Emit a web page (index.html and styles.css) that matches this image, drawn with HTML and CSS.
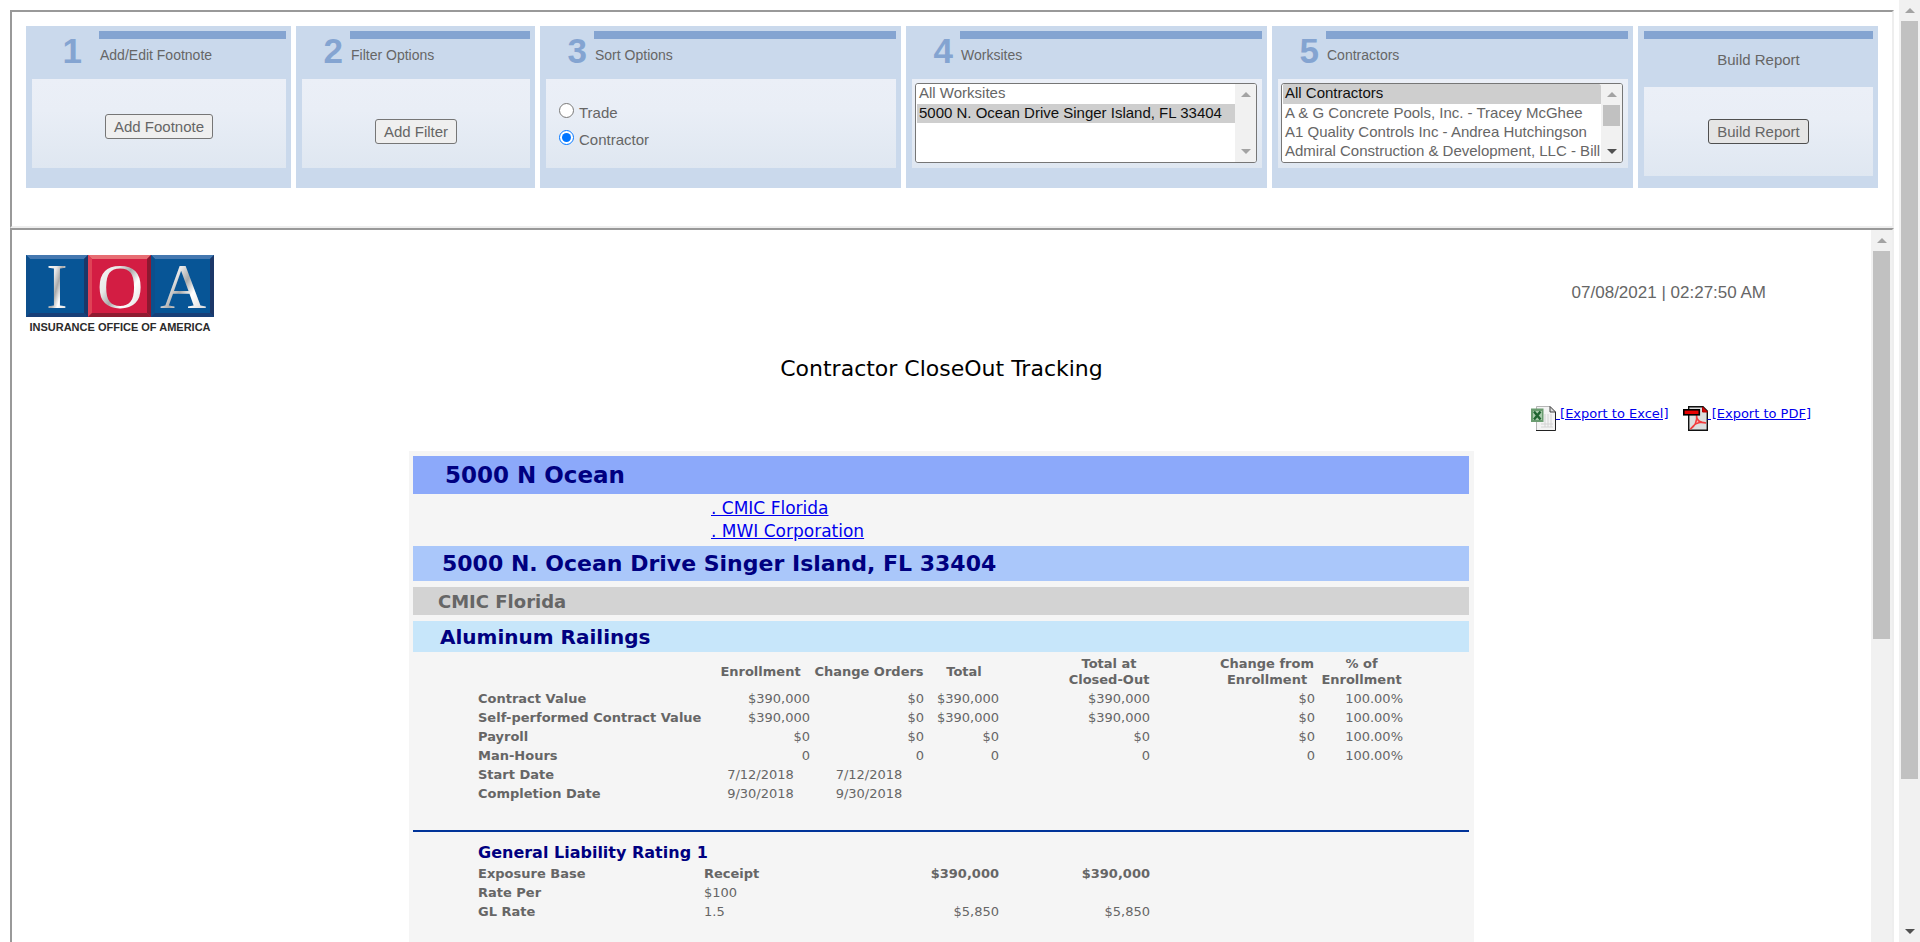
FILE: index.html
```html
<!DOCTYPE html>
<html lang="en">
<head>
<meta charset="utf-8">
<title>Contractor CloseOut Tracking</title>
<link rel="stylesheet" href="styles.css">
</head>
<body>
<main class="page">
  <form class="frame steps">
    <section class="panel first">
      <div class="head"><span class="num">1</span><h2>Add/Edit Footnote</h2></div>
      <div class="box raised"><button type="button">Add Footnote</button></div>
    </section>
    <section class="panel">
      <div class="head"><span class="num">2</span><h2>Filter Options</h2></div>
      <div class="box"><button type="button">Add Filter</button></div>
    </section>
    <section class="panel">
      <div class="head"><span class="num">3</span><h2>Sort Options</h2></div>
      <div class="box radios">
        <label><input type="radio" name="sort"><span>Trade</span></label>
        <label><input type="radio" name="sort" checked><span>Contractor</span></label>
      </div>
    </section>
    <section class="panel">
      <div class="head"><span class="num">4</span><h2><label for="worksites">Worksites</label></h2></div>
      <div class="box">
        <div class="list">
          <select id="worksites" multiple size="4">
            <option>All Worksites</option>
            <option selected>5000 N. Ocean Drive Singer Island, FL 33404</option>
          </select>
          <div class="scroll" aria-hidden="true"><i class="up"></i><i class="track"></i><i class="down dim"></i></div>
        </div>
      </div>
    </section>
    <section class="panel">
      <div class="head"><span class="num">5</span><h2><label for="contractors">Contractors</label></h2></div>
      <div class="box">
        <div class="list">
          <select id="contractors" multiple size="4">
            <option selected>All Contractors</option>
            <option>A &amp; G Concrete Pools, Inc. - Tracey McGhee</option>
            <option>A1 Quality Controls Inc - Andrea Hutchingson</option>
            <option>Admiral Construction &amp; Development, LLC - Bill</option>
          </select>
          <div class="scroll" aria-hidden="true"><i class="up"></i><i class="thumb short"></i><i class="track"></i><i class="down"></i></div>
        </div>
      </div>
    </section>
    <section class="panel build">
      <div class="head"><h2>Build Report</h2></div>
      <div class="box"><button type="submit" class="active">Build Report</button></div>
    </section>
  </form>

  <div class="frame viewer">
    <article class="doc">
      <header class="doc-head">
        <svg class="logo" width="188" height="78" viewBox="0 0 188 78" role="img" aria-label="Insurance Office of America">
          <defs>
            <linearGradient id="silver" x1="0" y1="0" x2="1" y2="1">
              <stop offset="0" stop-color="#fff"/><stop offset=".35" stop-color="#e8e8e8"/>
              <stop offset=".5" stop-color="#aaa"/><stop offset=".65" stop-color="#fff"/><stop offset="1" stop-color="#ccc"/>
            </linearGradient>
          </defs>
          <g>
            <rect width="62" height="62" fill="#075596"/>
            <path d="M0 0h62l-4 4H4z" fill="#4478b0"/><path d="M0 0v62l4-4V4z" fill="#0d4f8c"/>
            <path d="M62 0v62l-4-4V4z" fill="#1c3768"/><path d="M0 62h62l-4-4H4z" fill="#183f78"/>
          </g>
          <g>
            <rect x="62" width="63" height="62" fill="#d31d43"/>
            <path d="M62 0h63l-4 4H66z" fill="#e76d73"/><path d="M62 0v62l4-4V4z" fill="#df4256"/>
            <path d="M125 0v62l-4-4V4z" fill="#8d1830"/><path d="M62 62h63l-4-4H66z" fill="#8f1b31"/>
          </g>
          <g>
            <rect x="125" width="63" height="62" fill="#075596"/>
            <path d="M125 0h63l-4 4h-55z" fill="#4478b0"/><path d="M125 0v62l4-4V4z" fill="#0d4f8c"/>
            <path d="M188 0v62l-4-4V4z" fill="#1c3768"/><path d="M125 62h63l-4-4h-55z" fill="#183f78"/>
          </g>
          <g class="logo-letters"><text x="31" y="53">I</text><text x="94" y="53">O</text><text x="157" y="53">A</text></g>
          <text class="logo-name" x="94" y="76">INSURANCE OFFICE OF AMERICA</text>
        </svg>
        <time datetime="2021-07-08T02:27:50">07/08/2021 | 02:27:50 AM</time>
      </header>
      <h1>Contractor CloseOut Tracking</h1>
      <nav class="exports">
        <a href="#excel"><svg width="25" height="25" viewBox="0 0 25 25" aria-hidden="true">
          <path d="M5.500.5H19L24.500 6v18.500h-19z" fill="#f3f3f3" stroke="#b5b5b5"/>
          <path d="M24.500 6v18.500H5" fill="none" stroke="#222"/>
          <path d="M19 .5V6h5.500z" fill="#ddd" stroke="#444"/>
          <path d="M14 8v13M17 8v13M20 8v13M10 18h12M10 21h12" stroke="#d3d3d3"/>
          <rect y="2.500" width="12.500" height="13.500" fill="#6a9c70"/>
          <rect x="2" y="5" width="9" height="9" fill="#a9cbac"/>
          <path d="M3 5.500l6.500 8M9.500 5.500l-6.500 8" stroke="#1f6430" stroke-width="2.400"/>
        </svg><span>&nbsp;[Export to Excel]</span></a>
        <a href="#pdf"><svg width="25" height="25" viewBox="0 0 25 25" aria-hidden="true">
          <path d="M5.700 .7H20L24.300 5v19.300H5.700z" fill="#ddd" stroke="#111" stroke-width="1.400"/>
          <path d="M19.500 1v5H24.500z" fill="#e00000" stroke="#b00000"/>
          <path d="M13.500 9c0 5 3 8 9.500 8-6-2-11 0-15.500 6 4-2 7-8 6-14z" fill="#f7b5b5" stroke="#f23b3b" stroke-width="1.500"/>
          <rect x=".8" y="3.800" width="15.500" height="5" fill="#e80000" stroke="#000" stroke-width="1.600"/>
        </svg><span>&nbsp;[Export to PDF]</span></a>
      </nav>

      <div class="report">
        <h2 class="bar project">5000 N Ocean</h2>
        <nav class="contents">
          <a href="#cmic">. CMIC Florida</a>
          <a href="#mwi">. MWI Corporation</a>
        </nav>
        <h3 class="bar site">5000 N. Ocean Drive Singer Island, FL 33404</h3>
        <h4 class="bar company" id="cmic">CMIC Florida</h4>
        <h5 class="bar trade">Aluminum Railings</h5>

        <table class="figures">
          <colgroup><col class="w-label"><col class="w-enroll"><col class="w-change"><col class="w-total"><col class="w-closed"><col class="w-from"><col class="w-pct"></colgroup>
          <thead>
            <tr><td></td><th scope="col">Enrollment</th><th scope="col">Change Orders</th><th scope="col">Total</th><th scope="col">Total at<br>Closed-Out</th><th scope="col">Change from<br>Enrollment</th><th scope="col">% of<br>Enrollment</th></tr>
          </thead>
          <tbody>
            <tr><th scope="row">Contract Value</th><td>$390,000</td><td>$0</td><td>$390,000</td><td>$390,000</td><td>$0</td><td>100.00%</td></tr>
            <tr><th scope="row">Self-performed Contract Value</th><td>$390,000</td><td>$0</td><td>$390,000</td><td>$390,000</td><td>$0</td><td>100.00%</td></tr>
            <tr><th scope="row">Payroll</th><td>$0</td><td>$0</td><td>$0</td><td>$0</td><td>$0</td><td>100.00%</td></tr>
            <tr><th scope="row">Man-Hours</th><td>0</td><td>0</td><td>0</td><td>0</td><td>0</td><td>100.00%</td></tr>
            <tr class="dates"><th scope="row">Start Date</th><td>7/12/2018</td><td>7/12/2018</td><td></td><td></td><td></td><td></td></tr>
            <tr class="dates"><th scope="row">Completion Date</th><td>9/30/2018</td><td>9/30/2018</td><td></td><td></td><td></td><td></td></tr>
          </tbody>
        </table>
        <hr>
        <table class="rating">
          <caption>General Liability Rating 1</caption>
          <colgroup><col class="w-base"><col class="w-basis"><col class="w-amount"><col class="w-closed"></colgroup>
          <tbody>
            <tr class="strong"><th scope="row">Exposure Base</th><td class="basis">Receipt</td><td>$390,000</td><td>$390,000</td></tr>
            <tr><th scope="row">Rate Per</th><td class="basis">$100</td><td></td><td></td></tr>
            <tr><th scope="row">GL Rate</th><td class="basis">1.5</td><td>$5,850</td><td>$5,850</td></tr>
          </tbody>
        </table>
      </div>
    </article>
    <div class="scroll doc-scroll" aria-hidden="true"><i class="up"></i><i class="thumb"></i><i class="track"></i></div>
  </div>
</main>
<div class="scroll page-scroll" aria-hidden="true"><i class="up"></i><i class="thumb"></i><i class="track"></i><i class="down"></i></div>
</body>
</html>
```
FILE: styles.css
```css
* { box-sizing: border-box; }

body {
  margin: 0;
  height: 100vh;
  display: flex;
  overflow: hidden;
  background: #fff;
  color: #666;
  font-family: "Liberation Sans", Arial, sans-serif;
  font-size: 15px;
}

h1, h2, h3, h4, h5 { margin: 0; }

.page {
  flex: 1;
  min-width: 0;
  display: flex;
  flex-direction: column;
  padding: 10px 5px 0 10px;
}

.frame {
  border: 2px solid;
  border-color: #999 #eee #eee #999;
}

/* Step panels */
.steps {
  display: grid;
  grid-template-columns: 265fr 239fr 361fr 361fr 361fr 240fr;
  gap: 5px;
  padding: 14px 14px 38px;
}

.panel {
  min-width: 0;
  background: #cad9ec;
  padding: 5px 5px 20px 6px;
}

.head {
  display: flex;
  height: 48px;
}

.num {
  width: 48px;
  padding: 2px 7px 0 0;
  text-align: right;
  color: #84a4d1;
  font-size: 35px;
  line-height: 36px;
  font-weight: bold;
}

.first .num {
  width: 67px;
  padding-right: 17px;
}

.head h2 {
  flex: 1;
  border-top: 8px solid #84a4d1;
  padding: 8px 0 0 1px;
  font-size: 14px;
  line-height: 16px;
  font-weight: normal;
}

.box {
  height: 89px;
  display: flex;
  align-items: center;
  justify-content: center;
  padding-top: 16px;
  background: linear-gradient(#ebeff7, #e9eef6 35%, #dfe7f1);
}

.box.raised { padding-top: 6px; }

.build { padding-bottom: 12px; }
.build .head { height: 56px; }
.build .box { align-items: flex-start; padding-top: 32px; }
.build h2 {
  padding: 12px 0 0;
  text-align: center;
  font-size: 15px;
  line-height: 18px;
}

button {
  height: 25px;
  padding: 0 8px;
  border: 1px solid #767676;
  border-radius: 3px;
  background: #efefef;
  color: #666;
  font: 15px "Liberation Sans", Arial, sans-serif;
}

button.active {
  background: #e5e5e5;
  border-color: #4f4f4f;
}

.radios {
  flex-direction: column;
  align-items: flex-start;
  gap: 9px;
  padding: 4px 13px 0;
}

.radios label {
  display: flex;
  align-items: flex-start;
  gap: 5px;
  line-height: 18px;
}

.radios input {
  width: 15px;
  height: 15px;
  margin: 0;
}

.radios span { padding-top: 2px; line-height: 16px; }

.list {
  flex: 1;
  min-width: 0;
  height: 80px;
  display: flex;
  border: 1px solid #767676;
  border-radius: 3px;
  background: #fff;
  overflow: hidden;
}

.box:has(.list) { padding: 0 5px 1px 3px; }

select {
  flex: 1;
  min-width: 0;
  height: 78px;
  padding: 0 0 0 1px;
  border: 0;
  outline: 0;
  background: #fff;
  color: #666;
  font: 15px "Liberation Sans", Arial, sans-serif;
  overflow: hidden;
}

option { height: 19px; line-height: 19px; padding: 0 2px; min-height: 0; }
option:first-child { height: 20px; }

/* Scrollbars */
.scroll {
  flex: none;
  width: 21px;
  display: flex;
  flex-direction: column;
  align-items: center;
  background: #f1f1f1;
}

.up, .down {
  width: 21px;
  height: 21px;
  display: flex;
  align-items: center;
  justify-content: center;
}

.up::before, .down::before {
  content: "";
  border: 5px solid transparent;
}

.up::before { border-top: 0; border-bottom-color: #a3a3a3; }
.down::before { border-bottom: 0; border-top-color: #505050; }
.down.dim::before { border-top-color: #a3a3a3; }
.thumb { width: 17px; background: #c1c1c1; }
.thumb.short { height: 21px; }
.track { flex: 1; }
.page-scroll .thumb { flex: 758; }
.page-scroll .track { flex: 142; }
.doc-scroll .thumb { flex: 388; }
.doc-scroll .track { flex: 303; }

/* Report viewer */
.viewer {
  flex: 1;
  min-height: 0;
  display: flex;
  border-bottom: 0;
}

.doc {
  flex: 1;
  min-width: 0;
  overflow: hidden;
  font-family: "DejaVu Sans", Verdana, sans-serif;
}

.doc-head {
  display: flex;
  justify-content: space-between;
  align-items: center;
  padding: 25px 105px 0 14px;
}

.doc-head time {
  font-family: "Liberation Sans", Arial, sans-serif;
  font-size: 17px;
  padding-bottom: 2px;
}

.logo { display: block; overflow: visible; }

.logo-letters {
  font-family: "Liberation Serif", "Times New Roman", serif;
  font-size: 64px;
  line-height: 1;
  text-anchor: middle;
  fill: url(#silver);
}

.logo-name {
  font-family: "Liberation Sans", Arial, sans-serif;
  font-size: 11px;
  font-weight: bold;
  text-anchor: middle;
  fill: #2b2b2b;
}

h1 {
  margin-top: 22px;
  text-align: center;
  color: #000;
  font-size: 22px;
  line-height: 28px;
  font-weight: normal;
}

.exports {
  display: flex;
  justify-content: flex-end;
  gap: 14px;
  margin-top: 23px;
  padding-right: 60px;
  font-size: 13px;
  line-height: 16px;
}

.exports a { display: flex; color: #00e; }

.report {
  width: 1065px;
  max-width: 100%;
  min-height: 600px;
  margin: 20px auto 0;
  padding: 5px 5px 0 4px;
  background: #f5f5f5;
  font-size: 13px;
}

.bar { color: navy; padding-top: 1px; }
.project { background: #8ca9fa; padding-left: 32px; font-size: 23px; line-height: 37px; }
.site { background: #aac7fa; padding-left: 29px; font-size: 22px; line-height: 34px; }
.company { margin-top: 6px; background: #d3d3d3; color: #666; padding-left: 25px; font-size: 18px; line-height: 27px; }
.trade { margin-top: 6px; background: #c7e6fa; padding-left: 27px; font-size: 20px; line-height: 30px; }

.contents {
  display: flex;
  flex-direction: column;
  align-items: flex-start;
  padding: 3px 0 3px 298px;
  font-size: 17px;
  line-height: 23px;
}
.contents a { color: #00e; }

table {
  table-layout: fixed;
  border-collapse: collapse;
  margin-left: 65px;
}

.figures { width: 925px; margin-top: 2px; }
.rating { width: 672px; }

th, td {
  padding: 0;
  line-height: 19px;
  text-align: right;
  white-space: nowrap;
}
tbody th, .basis { text-align: left; }

.figures thead th {
  height: 35px;
  line-height: 16px;
  text-align: center;
}
.figures tr > :nth-child(3) { padding-left: 4px; }
.figures tr > :nth-child(4) { padding-left: 5px; }
.figures tr > :nth-child(5) { padding-left: 69px; }
.figures tr > :nth-child(6) { padding-left: 69px; }
.figures tr > :nth-child(7) { padding-left: 5px; }
.dates td { text-align: center; }
.strong td { font-weight: bold; }

.w-label { width: 233px; }
.w-enroll { width: 99px; }
.w-change { width: 114px; }
.w-total { width: 75px; }
.w-closed { width: 151px; }
.w-from { width: 165px; }
.w-pct { width: 88px; }
.w-base { width: 226px; }
.w-basis { width: 225px; }
.w-amount { width: 70px; }

hr {
  margin: 27px 0 10px;
  border: 0;
  border-top: 2px solid #039;
}

caption {
  text-align: left;
  color: navy;
  font-size: 16px;
  line-height: 22px;
  font-weight: bold;
}
```
